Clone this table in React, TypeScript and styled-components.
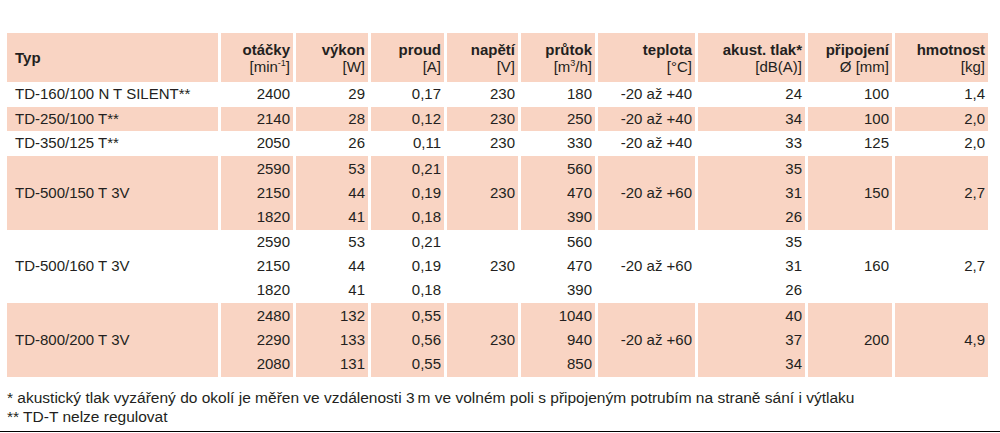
import React from "react";
import styled, { createGlobalStyle } from "styled-components";

const GlobalStyle = createGlobalStyle`
  html, body {
    margin: 0;
    padding: 0;
    background: #ffffff;
  }
  body {
    font-family: "Liberation Sans", Arial, Helvetica, sans-serif;
    color: #231f20;
  }
`;

const PINK = "#f9d4c3";

const Page = styled.div`
  width: 1000px;
  height: 433px;
  display: flex;
  flex-direction: column;
  box-sizing: border-box;
  padding-top: 33px;
  overflow: hidden;
`;

const Table = styled.div`
  display: flex;
  flex-direction: column;
  padding-left: 7px;
`;

const Row = styled.div<{ $h: number }>`
  display: grid;
  grid-template-columns: 211px 72px 72px 73px 71px 74px 97px 107px 84px 93px;
  column-gap: 3px;
  height: ${(p) => p.$h}px;
`;

const Cell = styled.div<{ $pink?: boolean; $left?: boolean }>`
  background: ${(p) => (p.$pink ? PINK : "transparent")};
  display: flex;
  flex-direction: column;
  justify-content: center;
  align-items: ${(p) => (p.$left ? "flex-start" : "flex-end")};
  padding: ${(p) => (p.$left ? "0 0 0 8px" : "0 3px 0 0")};
  font-size: 15px;
  white-space: nowrap;
`;

const Line = styled.div`
  line-height: 24px;
`;

const HeadLabel = styled.div`
  font-weight: 700;
  line-height: 17px;
  text-align: right;
`;

const HeadUnit = styled.div`
  line-height: 17px;
  text-align: right;
`;

const Sup = styled.sup`
  font-size: 9px;
  line-height: 0;
  vertical-align: 6px;
`;

const Stars = styled.span`
  font-size: 15px;
`;

const Notes = styled.div`
  padding-left: 7px;
  margin-top: 11px;
  font-size: 15.5px;
  line-height: 19px;
  white-space: nowrap;
`;

const Rule = styled.div`
  margin-top: auto;
  margin-bottom: 1px;
  height: 1px;
  background: #000000;
`;

type Col = { label: string; unit: React.ReactNode };

const cols: Col[] = [
  { label: "otáčky", unit: <>[min<Sup>-1</Sup>]</> },
  { label: "výkon", unit: "[W]" },
  { label: "proud", unit: "[A]" },
  { label: "napětí", unit: "[V]" },
  { label: "průtok", unit: <>[m<Sup>3</Sup>/h]</> },
  { label: "teplota", unit: "[°C]" },
  { label: "akust. tlak*", unit: "[dB(A)]" },
  { label: "připojení", unit: "Ø [mm]" },
  { label: "hmotnost", unit: "[kg]" },
];

type Data = {
  name: React.ReactNode;
  vals: string[][];
  h: number;
  pink: boolean;
};

const rows: Data[] = [
  {
    name: <>TD-160/100 N T SILENT<Stars>**</Stars></>,
    vals: [["2400"], ["29"], ["0,17"], ["230"], ["180"], ["-20 až +40"], ["24"], ["100"], ["1,4"]],
    h: 24.5,
    pink: false,
  },
  {
    name: <>TD-250/100 T<Stars>**</Stars></>,
    vals: [["2140"], ["28"], ["0,12"], ["230"], ["250"], ["-20 až +40"], ["34"], ["100"], ["2,0"]],
    h: 24.5,
    pink: true,
  },
  {
    name: <>TD-350/125 T<Stars>**</Stars></>,
    vals: [["2050"], ["26"], ["0,11"], ["230"], ["330"], ["-20 až +40"], ["33"], ["125"], ["2,0"]],
    h: 24.5,
    pink: false,
  },
  {
    name: "TD-500/150 T 3V",
    vals: [
      ["2590", "2150", "1820"],
      ["53", "44", "41"],
      ["0,21", "0,19", "0,18"],
      ["230"],
      ["560", "470", "390"],
      ["-20 až +60"],
      ["35", "31", "26"],
      ["150"],
      ["2,7"],
    ],
    h: 74,
    pink: true,
  },
  {
    name: "TD-500/160 T 3V",
    vals: [
      ["2590", "2150", "1820"],
      ["53", "44", "41"],
      ["0,21", "0,19", "0,18"],
      ["230"],
      ["560", "470", "390"],
      ["-20 až +60"],
      ["35", "31", "26"],
      ["160"],
      ["2,7"],
    ],
    h: 73.5,
    pink: false,
  },
  {
    name: "TD-800/200 T 3V",
    vals: [
      ["2480", "2290", "2080"],
      ["132", "133", "131"],
      ["0,55", "0,56", "0,55"],
      ["230"],
      ["1040", "940", "850"],
      ["-20 až +60"],
      ["40", "37", "34"],
      ["200"],
      ["4,9"],
    ],
    h: 74,
    pink: true,
  },
];

export default function App() {
  return (
    <>
      <GlobalStyle />
      <Page>
        <Table>
          <Row $h={49}>
            <Cell $pink $left>
              <HeadLabel>Typ</HeadLabel>
            </Cell>
            {cols.map((c) => (
              <Cell $pink key={c.label}>
                <HeadLabel>{c.label}</HeadLabel>
                <HeadUnit>{c.unit}</HeadUnit>
              </Cell>
            ))}
          </Row>
          {rows.map((r, i) => (
            <Row $h={r.h} key={i}>
              <Cell $pink={r.pink} $left>
                <Line>{r.name}</Line>
              </Cell>
              {r.vals.map((v, j) => (
                <Cell $pink={r.pink} key={j}>
                  {v.map((t, k) => (
                    <Line key={k}>{t}</Line>
                  ))}
                </Cell>
              ))}
            </Row>
          ))}
        </Table>
        <Notes>
          <div>
            * akustický tlak vyzářený do okolí je měřen ve vzdálenosti 3{"\u2009"}m ve volném poli s připojeným potrubím na straně sání i výtlaku
          </div>
          <div>** TD-T nelze regulovat</div>
        </Notes>
        <Rule />
      </Page>
    </>
  );
}
